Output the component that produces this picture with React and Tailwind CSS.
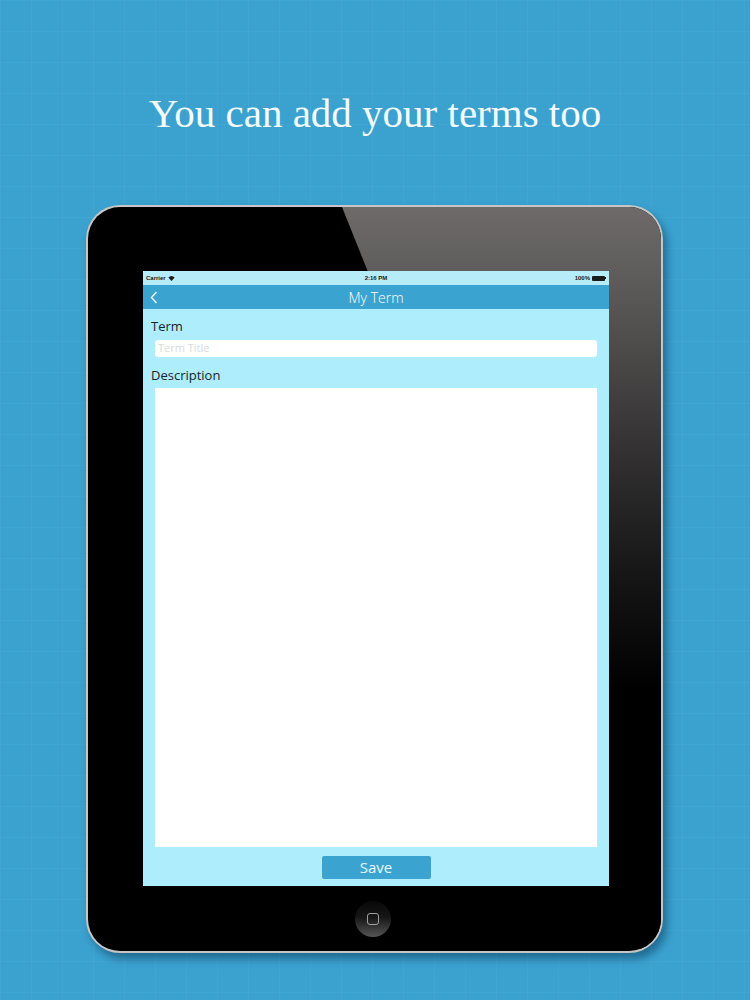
const StatusBar = () => (
  <div className="h-[14px] bg-[#b6ecf9] flex items-center justify-between px-[3px] text-[6px] font-bold text-[#1b1b1b] font-['Liberation_Sans',sans-serif]">
    <div className="flex items-center gap-[2px] w-[60px]">
      <span>Carrier</span>
      <svg width="7" height="5" viewBox="0 0 10 7">
        <path d="M5 7 L0.5 2.2 A6.5 6.5 0 0 1 9.5 2.2 Z" fill="#1b1b1b" />
      </svg>
    </div>
    <span>2:16 PM</span>
    <div className="flex items-center justify-end gap-[2px] w-[60px]">
      <span>100%</span>
      <div className="flex items-center">
        <div className="w-[13px] h-[5px] bg-[#1b1b1b] rounded-[1px]" />
        <div className="w-[1px] h-[2px] bg-[#1b1b1b]" />
      </div>
    </div>
  </div>
);

const NavBar = () => (
  <div className="h-[24px] bg-[#3ba3cf] flex items-center relative">
    <svg className="absolute left-[7px]" width="8" height="13" viewBox="0 0 8 13">
      <path d="M6.5 1 L1.5 6.5 L6.5 12" fill="none" stroke="#e9f8fd" strokeWidth="1.4" />
    </svg>
    <span className="flex-1 text-center text-[14px] text-white font-['Open_Sans',sans-serif] font-light">My Term</span>
  </div>
);

const Screen = () => (
  <div className="relative z-10 w-[466px] h-[615px] flex flex-col bg-[#aeedfc]">
    <StatusBar />
    <NavBar />
    <div className="flex-1 flex flex-col px-[12px] pt-[9px] pb-[7px] font-['Open_Sans',sans-serif]">
      <div className="-ml-[4px] text-[13px] leading-[16px] text-[#16262c]">Term</div>
      <div className="mt-[6px] h-[17px] bg-white rounded-[3px] px-[3px] flex items-center text-[11px] text-[#d6dde0]">
        Term Title
      </div>
      <div className="-ml-[4px] mt-[10px] text-[13px] leading-[16px] text-[#16262c]">Description</div>
      <div className="mt-[5px] flex-1 bg-white" />
      <div className="mt-[9px] flex justify-center">
        <button className="w-[109px] h-[23px] bg-[#3ba3cf] rounded-[2px] text-[15px] leading-none text-[#eaf8fd]">Save</button>
      </div>
    </div>
  </div>
);

const HomeButton = () => (
  <div className="w-[36px] h-[36px] rounded-full bg-[linear-gradient(180deg,#080808_0%,#161616_45%,#555_100%)] flex items-center justify-center">
    <div className="w-[12px] h-[12px] rounded-[3px] border border-[#a0a0a0]" />
  </div>
);

const Tablet = () => (
  <div className="relative mt-[69px] ml-[86px] w-[577px] h-[748px] rounded-[34px] bg-[#c6c6c6] p-[2px] shadow-[4px_6px_8px_rgba(0,40,70,0.45)]">
    <div className="relative w-full h-full rounded-[32px] bg-black overflow-hidden flex flex-col">
      <svg className="absolute inset-0" width="573" height="744" viewBox="0 0 573 744">
        <defs>
          <linearGradient id="glare" x1="0" y1="0" x2="0" y2="1">
            <stop offset="0" stopColor="#6d6a69" />
            <stop offset="0.12" stopColor="#5a5757" />
            <stop offset="0.3" stopColor="#383636" />
            <stop offset="0.5" stopColor="#151515" />
            <stop offset="0.65" stopColor="#000" />
          </linearGradient>
        </defs>
        <polygon points="254,0 573,0 573,744 552,744" fill="url(#glare)" />
      </svg>
      <div className="pt-[64px] pl-[55px]">
        <Screen />
      </div>
      <div className="flex-1 flex items-center justify-center pr-[3px]">
        <HomeButton />
      </div>
    </div>
  </div>
);

export default function App() {
  return (
    <div className="w-[750px] h-[1000px] overflow-hidden bg-[#3ba2cf] bg-[linear-gradient(rgba(255,255,255,0.035)_1px,transparent_1px),linear-gradient(90deg,rgba(255,255,255,0.035)_1px,transparent_1px)] bg-[size:31px_31px]">
      <h1 className="pt-[90px] text-center text-[41px] leading-[46px] text-[#f4fbfd] font-['Liberation_Serif',serif]">
        You can add your terms too
      </h1>
      <Tablet />
    </div>
  );
}
